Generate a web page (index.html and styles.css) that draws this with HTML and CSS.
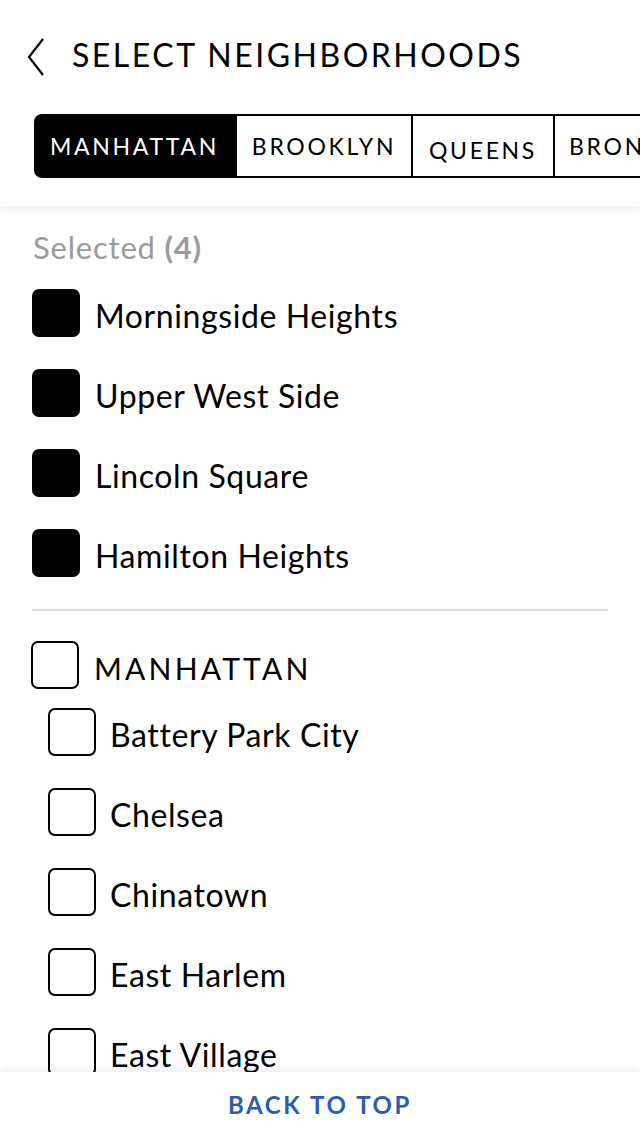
FILE: index.html
```html
<!DOCTYPE html>
<html>
<head>
<meta charset="utf-8">
<link rel="stylesheet" href="styles.css">
</head>
<body>
<div class="app">
  <header class="header">
    <div class="title-row">
      <svg class="back" width="20" height="40" viewBox="0 0 20 40"><path d="M17 2 L3 20 L17 38" fill="none" stroke="#000" stroke-width="2.2"/></svg>
      <h1 class="title">SELECT NEIGHBORHOODS</h1>
    </div>
    <div class="tabs">
      <div class="tab tab-active">MANHATTAN</div>
      <div class="tab">BROOKLYN</div>
      <div class="tab tab-low">QUEENS</div>
      <div class="tab">BRONX</div>
    </div>
  </header>
  <main class="content">
    <div class="selected-label">Selected <b>(4)</b></div>
    <ul class="list selected-list">
      <li class="row"><span class="box box-filled"></span><span class="label">Morningside Heights</span></li>
      <li class="row"><span class="box box-filled"></span><span class="label">Upper West Side</span></li>
      <li class="row"><span class="box box-filled"></span><span class="label">Lincoln Square</span></li>
      <li class="row"><span class="box box-filled"></span><span class="label">Hamilton Heights</span></li>
    </ul>
    <div class="divider"></div>
    <div class="row group-row"><span class="box"></span><span class="label group-label">MANHATTAN</span></div>
    <ul class="list sub-list">
      <li class="row"><span class="box"></span><span class="label">Battery Park City</span></li>
      <li class="row"><span class="box"></span><span class="label">Chelsea</span></li>
      <li class="row"><span class="box"></span><span class="label">Chinatown</span></li>
      <li class="row"><span class="box"></span><span class="label">East Harlem</span></li>
      <li class="row"><span class="box"></span><span class="label">East Village</span></li>
      <li class="row"><span class="box"></span><span class="label">Financial District</span></li>
    </ul>
  </main>
  <footer class="footer">BACK TO TOP</footer>
</div>
</body>
</html>
```
FILE: styles.css
```css
html, body {
  margin: 0;
  padding: 0;
  background: #fff;
}
body {
  font-family: "Lato", "Noto Sans", sans-serif;
  color: #000;
}
.app {
  width: 640px;
  height: 1136px;
  display: flex;
  flex-direction: column;
  overflow: hidden;
}
.header {
  flex: none;
  height: 206px;
  background: #fff;
  box-shadow: 0 3px 8px rgba(0,0,0,0.07);
  position: relative;
  z-index: 2;
  overflow: hidden;
}
.title-row {
  display: flex;
  align-items: center;
  height: 74px;
  padding-top: 18px;
  padding-left: 26px;
  gap: 26px;
}
.back {
  display: block;
  margin-top: 3px;
}
.title {
  margin: 0;
  font-size: 32px;
  font-weight: 400;
  letter-spacing: 2.5px;
  line-height: 1;
}
.tabs {
  display: flex;
  margin-left: 34px;
  margin-top: 22px;
  width: 700px;
}
.tab {
  flex: none;
  height: 60px;
  border: 2px solid #000;
  border-left: none;
  display: flex;
  align-items: center;
  justify-content: center;
  font-size: 23px;
  letter-spacing: 2.7px;
  box-sizing: content-box;
}
.tab:nth-child(1) { width: 201px; }
.tab:nth-child(2) { width: 174px; }
.tab:nth-child(3) { width: 140px; }
.tab:nth-child(4) { width: 160px; justify-content: flex-start; padding-left: 14px; }
.tab-active {
  background: #000;
  color: #fff;
  border-radius: 8px 0 0 8px;
}
.tab-low {
  padding-top: 8px;
  height: 52px;
}
.content {
  flex: 1;
  overflow: hidden;
  position: relative;
  z-index: 1;
}
.selected-label {
  margin: 24px 0 0 33px;
  font-size: 31px;
  color: #9b9b9b;
  line-height: 34px;
  letter-spacing: 0.8px;
}
.selected-label b {
  font-weight: 700;
}
.list {
  list-style: none;
  margin: 0;
  padding: 0;
}
.row {
  display: flex;
  align-items: center;
  height: 80px;
  padding-left: 32px;
  gap: 15px;
}
.selected-list {
  margin-top: 9px;
}
.box {
  flex: none;
  width: 44px;
  height: 44px;
  border: 2px solid #000;
  border-radius: 7px;
}
.box-filled {
  background: #000;
}
.label {
  font-size: 32px;
  line-height: 1;
  letter-spacing: 0.6px;
  padding-top: 5px;
}
.divider {
  margin: 16px 32px 0 32px;
  height: 2px;
  background: #dcdcdc;
}
.group-row {
  margin-top: 14px;
  height: 80px;
  padding-left: 31px;
  margin-bottom: -13px;
}
.group-label {
  letter-spacing: 3.2px;
  font-size: 30px;
}
.sub-list .row {
  padding-left: 48px;
  gap: 14px;
}
.footer {
  flex: none;
  height: 64px;
  background: #fff;
  box-shadow: 0 -3px 8px rgba(0,0,0,0.07);
  position: relative;
  z-index: 2;
  display: flex;
  align-items: center;
  justify-content: center;
  color: #2a5db0;
  font-size: 24px;
  font-weight: 700;
  letter-spacing: 2.6px;
}
```
